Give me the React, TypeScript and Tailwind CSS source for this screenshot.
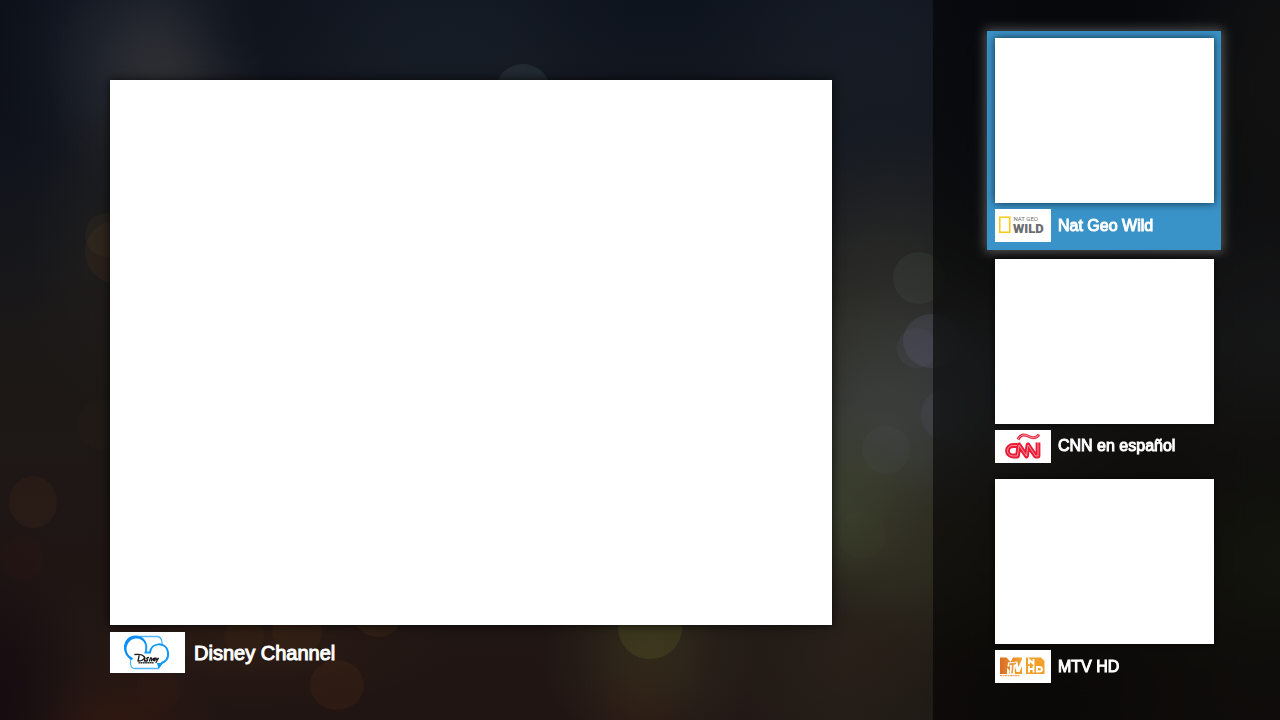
import type { ReactNode } from "react";

type Blob = [cx: number, cy: number, rx: number, ry: number, color: string, opacity: number];

const glows: Blob[] = [
  [0, 40, 110, 300, "#080b14", 0.6],
  [110, 50, 130, 110, "#1f2531", 0.4],
  [160, 80, 110, 140, "#323337", 0.8],
  [270, 20, 110, 90, "#0d111a", 0.5],
  [450, 50, 190, 120, "#1a212b", 0.5],
  [660, 0, 170, 100, "#0c121d", 0.6],
  [860, 60, 170, 160, "#1a202a", 0.5],
  [110, 260, 80, 160, "#23201c", 0.5],
  [890, 290, 150, 170, "#30322d", 0.65],
  [860, 350, 120, 120, "#33342d", 0.6],
  [890, 430, 160, 140, "#424542", 0.8],
  [845, 510, 120, 110, "#424a32", 0.75],
  [920, 560, 150, 150, "#312f22", 0.7],
  [870, 660, 150, 90, "#2a2018", 0.7],
  [650, 650, 110, 110, "#3a351f", 0.6],
  [640, 710, 70, 80, "#3b2114", 0.3],
  [250, 640, 200, 70, "#352014", 0.5],
  [120, 730, 100, 80, "#35190f", 0.7],
  [0, 700, 90, 190, "#130a10", 0.75],
  [1080, 60, 150, 200, "#0c0f16", 0.6],
  [1270, 80, 120, 240, "#33302c", 0.7],
  [1260, 330, 180, 170, "#3a3c40", 0.7],
  [1010, 380, 170, 140, "#3a3d43", 0.7],
  [1270, 560, 120, 110, "#333b24", 0.6],
  [1040, 690, 200, 130, "#14120d", 0.7],
];

const bokeh: Blob[] = [
  [523, 92, 28, 28, "#5a6c70", 0.2],
  [107, 235, 22, 22, "#6a5528", 0.1],
  [116, 252, 31, 31, "#7a4320", 0.12],
  [33, 502, 24, 26, "#80401d", 0.11],
  [22, 558, 22, 23, "#662a1c", 0.06],
  [102, 425, 25, 25, "#5c4020", 0.06],
  [337, 685, 27, 25, "#82401c", 0.12],
  [297, 632, 25, 24, "#805019", 0.1],
  [244, 637, 20, 20, "#805019", 0.06],
  [158, 690, 22, 22, "#74381a", 0.05],
  [378, 615, 24, 22, "#805019", 0.12],
  [650, 628, 32, 31, "#77802c", 0.18],
  [919, 278, 26, 26, "#6b7168", 0.12],
  [932, 341, 29, 27, "#6f6f8f", 0.2],
  [917, 348, 20, 20, "#6f6f8f", 0.1],
  [886, 450, 24, 24, "#6a6d80", 0.07],
  [944, 415, 23, 25, "#6d6d90", 0.12],
  [862, 535, 24, 24, "#596a39", 0.06],
];

function Backdrop() {
  return (
    <svg
      className="absolute inset-0 h-full w-full"
      viewBox="0 0 1280 720"
      preserveAspectRatio="xMidYMid slice"
      aria-hidden="true"
    >
      <defs>
        <linearGradient id="sky" x1="0" y1="0" x2="0" y2="1">
          <stop offset="0" stopColor="#111620" />
          <stop offset="0.25" stopColor="#16191f" />
          <stop offset="0.5" stopColor="#1c1816" />
          <stop offset="0.85" stopColor="#201614" />
          <stop offset="1" stopColor="#211513" />
        </linearGradient>
        <linearGradient id="right" x1="0" y1="0" x2="1" y2="0">
          <stop offset="0.45" stopColor="#24241d" stopOpacity="0" />
          <stop offset="0.7" stopColor="#24241d" stopOpacity="0.8" />
        </linearGradient>
        {glows.map(([, , , , color, opacity], i) => (
          <radialGradient key={i} id={`glow${i}`}>
            <stop offset="0" stopColor={color} stopOpacity={opacity} />
            <stop offset="0.3" stopColor={color} stopOpacity={opacity * 0.8} />
            <stop offset="0.65" stopColor={color} stopOpacity={opacity * 0.3} />
            <stop offset="1" stopColor={color} stopOpacity="0" />
          </radialGradient>
        ))}
      </defs>
      <rect width="1280" height="720" fill="url(#sky)" />
      <rect y="320" width="1280" height="400" fill="url(#right)" opacity="0.7" />
      {glows.map(([cx, cy, rx, ry], i) => (
        <ellipse key={i} cx={cx} cy={cy} rx={rx} ry={ry} fill={`url(#glow${i})`} />
      ))}
      {bokeh.map(([cx, cy, rx, ry, color, opacity], i) => (
        <ellipse key={i} cx={cx} cy={cy} rx={rx} ry={ry} fill={color} opacity={opacity} />
      ))}
    </svg>
  );
}

function DisneyLogo() {
  return (
    <svg viewBox="0 0 75 41" className="h-full w-full" role="img" aria-label="Disney Channel logo">
      <path
        d="M30 4.500H47Q51.500 5 52 10V14M20.500 27V32Q21 36.500 25 36.500H48L52 31"
        fill="none"
        stroke="#51b5fb"
        strokeWidth="1.300"
      />
      <path
        d="M22.500 27C12 23 12 5 25.500 4.500C34.500 4.500 38 13 35.500 20.500H40C41 10 56 9.500 58 20C59 27 55 30.500 51 31"
        fill="none"
        stroke="#1698fb"
        strokeWidth="2"
      />
      <path d="M21.500 28C10 21 13 4 25.500 4C32 4 35 9 36 12C32 6.500 26 5 20.500 8.500C14 14 16 23 22 26Z" fill="#078ffc" />
      <path d="M47 31H53L48.500 37Z" fill="#0994fb" />
      <path
        d="M25 22.500Q32 21.500 34.500 25Q34 29 28 29M29 24L28 29M35 26L34.500 29M38.500 25.500Q35.500 26 37.500 27.500Q38 29 35.500 29M39.500 29L40.500 26Q42.500 25.500 41.500 29M43 27.500H45Q45.500 25.500 43.500 26.500Q42.500 29 45 28.500M46 26Q46 29 48.500 26L46 30.500"
        fill="none"
        stroke="#1b1b1b"
        strokeWidth="1.300"
        strokeLinecap="round"
      />
      <path d="M28.500 30.700H44" stroke="#333" strokeWidth="1.400" strokeDasharray="1.800 .4" />
    </svg>
  );
}

function NatGeoLogo() {
  return (
    <svg viewBox="0 0 56 33" className="h-full w-full" role="img" aria-label="Nat Geo Wild logo">
      <rect x="4.750" y="8.250" width="10" height="15" fill="none" stroke="#fcc91c" strokeWidth="1.600" />
      <text x="18.500" y="12" fontSize="6" fill="#6f7073" fontFamily="Roboto, sans-serif">
        NAT GEO
      </text>
      <text x="18" y="24" fontSize="13" fontWeight="900" fill="#6b6c70" fontFamily="Roboto, sans-serif">
        WILD
      </text>
    </svg>
  );
}

function CnnLogo() {
  const strokes = "M22 15.500H18.500C10.500 15.500 10.500 26 18.500 26H22.500L24 15L31.500 26L33 15L40.500 26H43V12.500";
  const tilde = "M23 9.500C26 3.500 30 4.500 34 6.500C38 8.500 41.500 8 44 4.500";
  return (
    <svg viewBox="0 0 56 33" className="h-full w-full" role="img" aria-label="CNN en español logo">
      <path d={strokes} fill="none" stroke="#ea1c36" strokeWidth="4.800" strokeLinejoin="round" />
      <path d={strokes} fill="none" stroke="#fbdfe3" strokeWidth=".8" opacity=".75" />
      <path d={tilde} fill="none" stroke="#e5243c" strokeWidth="3" />
      <path d={tilde} fill="none" stroke="#fff" strokeWidth=".7" opacity=".8" />
    </svg>
  );
}

function MtvLogo() {
  return (
    <svg viewBox="0 0 56 33" className="h-full w-full" role="img" aria-label="MTV HD logo">
      <defs>
        <linearGradient id="mtv" x1="0" x2="1">
          <stop offset="0" stopColor="#d96c26" />
          <stop offset="1" stopColor="#f5a42a" />
        </linearGradient>
      </defs>
      <path d="M5 7.500H11.500L15.500 12L18 7.500H27V24H20V22L18 24H5Z" fill="url(#mtv)" />
      <path d="M12 24V18L14.500 20V24Z" fill="#fff" />
      <path d="M13 12.500L22 11.500L24 16L27 9L30 8.500L24.500 22H21.500L20 16.500L19.500 25H15V16L12.500 17Z" fill="#fff" />
      <path d="M14 13.500L21.300 12.600L21 14.300L18.700 14.700L17.800 23.500H16.200L17 15L14 15.500ZM21.800 14.500L23.200 20L27 10.500" fill="#ee9a3d" />
      <path d="M22 14L23.200 19.500L27.200 10.500" fill="none" stroke="#fff" strokeWidth="1.500" />
      <path d="M5 25.700H25" stroke="#e9a467" strokeWidth="1.300" strokeDasharray="2 .5" />
      <path d="M31 7.500H46L49.500 11V24H31Z" fill="#f3a02a" />
      <path
        d="M34 14.300V9.500L38.500 14V9M34 16V22.500M38.500 16V22.500M34 19H38.500M42 17V21.500H44Q47 21.500 47 19.200Q47 17 44 17H41"
        fill="none"
        stroke="#fff"
        strokeWidth="1.900"
      />
    </svg>
  );
}

type Channel = { name: string; logo: ReactNode; selected?: boolean };

const channels: Channel[] = [
  { name: "Nat Geo Wild", logo: <NatGeoLogo />, selected: true },
  { name: "CNN en español", logo: <CnnLogo /> },
  { name: "MTV HD", logo: <MtvLogo /> },
];

function ChannelCard({ name, logo, selected }: Channel) {
  return (
    <button
      type="button"
      aria-pressed={!!selected}
      className={
        "flex w-full flex-col gap-1.5 pt-[7px] pr-[7px] pb-2 pl-2 text-left " +
        (selected ? "bg-[#3992c8] shadow-[0_0_10px_2px_rgba(255,255,255,0.3)]" : "")
      }
    >
      <span className="block h-[165px] w-full bg-white shadow-[0_0_8px_rgba(0,0,0,0.7)]" />
      <span className="flex items-center gap-[7px]">
        <span className="block h-[33px] w-14 shrink-0 bg-white">{logo}</span>
        <span className="text-[16px] leading-5 text-white [-webkit-text-stroke:1px_white]">{name}</span>
      </span>
    </button>
  );
}

export default function App() {
  return (
    <div className="relative isolate flex min-h-screen overflow-hidden bg-[#15161a] font-['Liberation_Sans',Arial,sans-serif]">
      <div className="absolute inset-0 -z-10">
        <Backdrop />
      </div>
      <main className="flex min-w-0 flex-1 flex-col gap-[7px] pt-20 pr-[101px] pb-[47px] pl-[110px]">
        <div className="min-h-[320px] w-full flex-1 bg-white shadow-[0_0_10px_rgba(0,0,0,0.75)]" />
        <div className="flex items-center gap-[9px]">
          <div className="h-[41px] w-[75px] shrink-0 bg-white">
            <DisneyLogo />
          </div>
          <h1 className="text-[20px] leading-6 text-white [-webkit-text-stroke:1px_white]">Disney Channel</h1>
        </div>
      </main>
      <aside
        aria-label="Channels"
        className="flex w-[347px] shrink-0 flex-col justify-between bg-black/55 pt-[31px] pr-[59px] pb-[29px] pl-[54px] backdrop-blur-xl"
      >
        {channels.map((channel) => (
          <ChannelCard key={channel.name} {...channel} />
        ))}
      </aside>
    </div>
  );
}
